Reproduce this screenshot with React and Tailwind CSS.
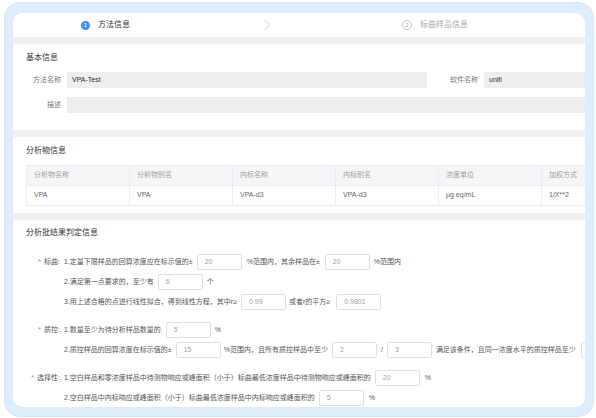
import React from "react";

const F = "font-['Liberation_Sans','Noto_Sans_CJK_SC',sans-serif]";

function Inp({ v, w = "w-[45px]", cls = "" }) {
  return (
    <div className={`${w} h-[16px] shrink-0 border border-[#dcdfe6] rounded-[2px] bg-white flex items-center pl-[7px] text-[7px] text-[#a0a0a0] ${cls}`}>
      {v}
    </div>
  );
}

function T({ children, cls = "" }) {
  return <span className={`shrink-0 whitespace-nowrap ${cls}`}>{children}</span>;
}

function Row({ label, children, cls = "" }) {
  return (
    <div className={`flex items-center h-[16px] ${cls}`}>
      <div className="w-[38px] shrink-0 text-right pr-[4px] whitespace-nowrap">
        {label ? (
          <>
            <span className="text-[#f56c6c] mr-[3px]">*</span>
            <span className="text-[#555]">{label}</span>
          </>
        ) : null}
      </div>
      {children}
    </div>
  );
}

export default function App() {
  const cols = [
    ["分析物名称", "VPA"],
    ["分析物别名", "VPA"],
    ["内标名称", "VPA-d3"],
    ["内标别名", "VPA-d3"],
    ["浓度单位", "μg eq/mL"],
    ["加权方式", "1/X**2"],
  ];
  return (
    <div className={`w-[596px] h-[418px] bg-white pt-[2px] pl-[4px] pr-[2px] pb-[1px] ${F}`}>
      <div className="w-full h-full rounded-[16px] bg-[#deedfc] border border-[#d2e5fb] pt-[10px] pl-[8px] pr-[8px] pb-[9px]">
        <div className="w-full h-full rounded-[10px] bg-[#f0f1f3] overflow-hidden flex flex-col">
          {/* steps header */}
          <div className="h-[24px] bg-white flex items-center shrink-0">
            <div className="ml-[68px] flex items-center">
              <div className="w-[9px] h-[9px] rounded-full bg-[#3d8ef5] flex items-center justify-center text-white text-[5px] font-bold leading-none">1</div>
              <span className="ml-[8px] text-[8px] text-[#303133] leading-none">方法信息</span>
            </div>
            <svg className="ml-[133px]" width="8" height="12" viewBox="0 0 8 12">
              <path d="M1.5 1 L6.5 6 L1.5 11" fill="none" stroke="#c8c8c8" strokeWidth="0.8" />
            </svg>
            <div className="ml-[131px] flex items-center">
              <div className="w-[10px] h-[10px] rounded-full border border-[#c5c5c5] flex items-center justify-center text-[#aaa] text-[6px] leading-none">2</div>
              <span className="ml-[8px] text-[8px] text-[#a8a8a8] leading-none">标曲样品信息</span>
            </div>
          </div>

          {/* section 1 */}
          <div className="mt-[7px] h-[86px] bg-white shrink-0 pl-[13px] pt-[10px]">
            <div className="text-[8px] leading-[8px] text-[#303133]">基本信息</div>
            <div className="mt-[10px] flex items-center h-[16px] text-[7px]">
              <div className="w-[35px] text-right text-[#777] shrink-0">方法名称</div>
              <div className="ml-[6px] w-[360px] h-[16px] bg-[#eeeeee] shrink-0 flex items-center pl-[5px] text-[#333]">VPA-Test</div>
              <div className="w-[51px] text-right text-[#777] shrink-0">软件名称</div>
              <div className="ml-[6px] w-[110px] h-[16px] bg-[#eeeeee] shrink-0 flex items-center pl-[5px] text-[#333]">unifi</div>
            </div>
            <div className="mt-[9px] flex items-center h-[16px] text-[7px]">
              <div className="w-[35px] text-right text-[#777] shrink-0">描述</div>
              <div className="ml-[6px] w-[530px] h-[16px] bg-[#eeeeee] shrink-0"></div>
            </div>
          </div>

          {/* section 2 */}
          <div className="mt-[7px] h-[76px] bg-white shrink-0 pl-[13px] pt-[10px]">
            <div className="text-[8px] leading-[8px] text-[#303133]">分析物信息</div>
            <div className="mt-[10px] flex text-[7px] border-t border-l border-[#ebeef5] w-max">
              {cols.map(([h, d], i) => (
                <div key={i} className="w-[103px] shrink-0 border-r border-[#ebeef5]">
                  <div className="h-[20px] bg-[#f5f6f8] border-b border-[#ebeef5] flex items-center pl-[7px] text-[#a0a0a0]">{h}</div>
                  <div className="h-[20px] border-b border-[#ebeef5] flex items-center pl-[7px] text-[#666]">{d}</div>
                </div>
              ))}
            </div>
          </div>

          {/* section 3 */}
          <div className="mt-[7px] flex-1 bg-white pl-[13px] pt-[9px] text-[7px] text-[#555]">
            <div className="text-[8px] leading-[8px] text-[#303133]">分析批结果判定信息</div>
            <Row label="标曲:" cls="mt-[17px]">
              <T>1.定量下限样品的回算浓度应在标示值的±</T>
              <Inp v="20" cls="ml-[4px]" />
              <T cls="ml-[5px]">%范围内，其余样品在±</T>
              <Inp v="20" cls="ml-[5px]" />
              <T cls="ml-[4px]">%范围内</T>
            </Row>
            <Row cls="mt-[4px]">
              <T>2.满足第一点要求的，至少有</T>
              <Inp v="6" cls="ml-[4px]" />
              <T cls="ml-[4px]">个</T>
            </Row>
            <Row cls="mt-[4px]">
              <T>3.用上述合格的点进行线性拟合，得到线性方程，其中r≥</T>
              <Inp v="0.99" cls="ml-[4px]" />
              <T cls="ml-[3px]">或者r的平方≥</T>
              <Inp v="0.9801" cls="ml-[6px]" />
            </Row>

            <Row label="质控:" cls="mt-[12px]">
              <T>1.数量至少为待分析样品数量的</T>
              <Inp v="5" cls="ml-[5px]" />
              <T cls="ml-[4px]">%</T>
            </Row>
            <Row cls="mt-[4px]">
              <T>2.质控样品的回算浓度在标示值的±</T>
              <Inp v="15" cls="ml-[4px]" />
              <T cls="ml-[3px]">%范围内，且所有质控样品中至少</T>
              <Inp v="2" cls="ml-[4px]" />
              <T cls="ml-[4px]">/</T>
              <Inp v="3" cls="ml-[4px]" />
              <T cls="ml-[4px]">满足该条件，且同一浓度水平的质控样品至少</T>
              <Inp v="" cls="ml-[5px]" />
            </Row>

            <Row label="选择性:" cls="mt-[12px]">
              <T>1.空白样品和零浓度样品中待测物响应或峰面积（小于）标曲最低浓度样品中待测物响应或峰面积的</T>
              <Inp v="20" cls="ml-[4px]" />
              <T cls="ml-[5px]">%</T>
            </Row>
            <Row cls="mt-[4px]">
              <T>2.空白样品中内标响应或峰面积（小于）标曲最低浓度样品中内标响应或峰面积的</T>
              <Inp v="5" cls="ml-[4px]" />
              <T cls="ml-[5px]">%</T>
            </Row>
          </div>
        </div>
      </div>
    </div>
  );
}
